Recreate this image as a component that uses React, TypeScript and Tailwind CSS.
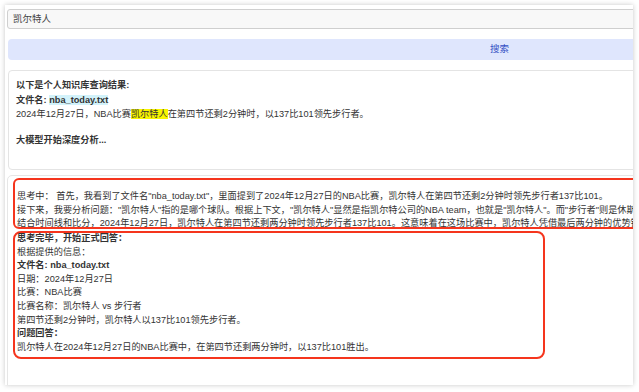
export default function App() {
    return (
        <div className="min-h-[392px] w-[639px] overflow-hidden bg-white pl-[5px] pt-[5px] font-['Liberation_Sans','Noto_Sans_CJK_SC',sans-serif] text-[9.2px] text-[#333]">
            <div className="h-[380px] w-[628px] overflow-hidden bg-white shadow-[0_0_5px_rgba(0,0,0,0.22)]">
                <div className="w-[986px] pl-[2px]">
                    {/* search input */}
                    <div className="mt-[4px] flex h-[20px] items-center rounded-[3px] border border-[#cfcfcf] bg-[#f8f8f8] pl-[5px] text-[9.5px] text-[#444]">
                        凯尔特人
                    </div>

                    <div className="ml-[1px] mt-[10px] flex h-[21px] items-center justify-center rounded-[4px] bg-[#dfe6fd] text-[9.5px] text-[#3550c4]">
                        搜索
                    </div>

                    {/* knowledge base result */}
                    <div className="ml-[1px] mt-[10px] h-[100px] rounded-[4px] border border-[#e4e4e4] pl-[7px] pt-[7px] leading-[14.5px]">
                        <div className="font-bold">以下是个人知识库查询结果:</div>
                        <div className="font-bold">
                            文件名: <span className="bg-[#d2f2fa]">nba_today.txt</span>
                        </div>
                        <div>
                            2024年12月27日，NBA比赛<span className="bg-[#f9f500]">凯尔特人</span>在第四节还剩2分钟时，以137比101领先步行者。
                        </div>
                        <div className="mt-[11px] font-bold">大模型开始深度分析...</div>
                    </div>

                    {/* output */}
                    <div className="mt-[5px] h-[220px] rounded-[5px] border border-[#e6e6e6] pl-[5px] pt-[2px]">
                        <div className="h-[51px] overflow-hidden rounded-[6px] border-2 border-[#f5351d] pl-[2px] pt-[10px] leading-[13.6px] whitespace-nowrap">
                            <div>思考中： 首先，我看到了文件名"nba_today.txt"，里面提到了2024年12月27日的NBA比赛，凯尔特人在第四节还剩2分钟时领先步行者137比101。</div>
                            <div>接下来，我要分析问题："凯尔特人"指的是哪个球队。根据上下文，"凯尔特人"显然是指凯尔特公司的NBA team，也就是"凯尔特人"。而"步行者"则是休斯顿火箭的别称。</div>
                            <div>结合时间线和比分，2024年12月27日，凯尔特人在第四节还剩两分钟时领先步行者137比101。这意味着在这场比赛中，凯尔特人凭借最后两分钟的优势锁定了胜局。</div>
                        </div>

                        <div className="mt-[2px] h-[128px] w-[532px] rounded-[8px] border-2 border-[#f5351d] pl-[2px] leading-[13.6px]">
                            <div className="-mt-[1px] font-bold">思考完毕，开始正式回答：</div>
                            <div>根据提供的信息：</div>
                            <div className="font-bold">文件名: nba_today.txt</div>
                            <div>日期：2024年12月27日</div>
                            <div>比赛：NBA比赛</div>
                            <div>比赛名称：凯尔特人 vs 步行者</div>
                            <div>第四节还剩2分钟时，凯尔特人以137比101领先步行者。</div>
                            <div className="font-bold">问题回答：</div>
                            <div>凯尔特人在2024年12月27日的NBA比赛中，在第四节还剩两分钟时，以137比101胜出。</div>
                        </div>
                    </div>
                </div>
            </div>
        </div>
    );
}
